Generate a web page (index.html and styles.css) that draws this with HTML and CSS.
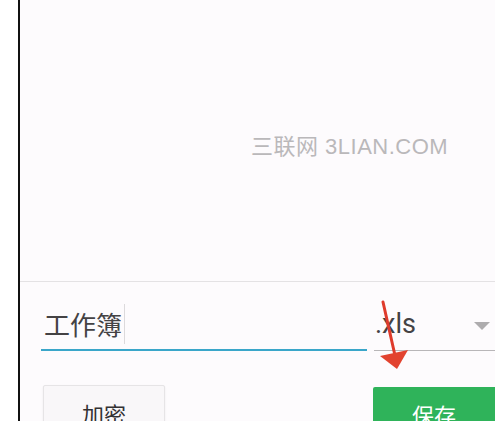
FILE: index.html
```html
<!DOCTYPE html>
<html>
<head>
<meta charset="utf-8">
<link rel="stylesheet" href="styles.css">
</head>
<body>
<div class="page">
  <div class="preview">
    <span class="watermark">三联网 3LIAN.COM</span>
  </div>
  <div class="form">
    <div class="name-field">
      <span class="name-text">工作簿</span><span class="cursor"></span>
    </div>
    <div class="ext-field">
      <span class="ext-text">.xls</span>
      <span class="caret"></span>
    </div>
  </div>
  <div class="actions">
    <div class="btn btn-encrypt">加密</div>
    <div class="btn btn-save">保存</div>
  </div>
</div>
<svg class="arrow" width="495" height="421" viewBox="0 0 495 421">
  <path d="M383 302 L396 360" stroke="#df3b2c" stroke-width="3" stroke-linecap="round" fill="none"/>
  <path d="M380 356 L408 350 L397 369 Z" fill="#e2432f"/>
</svg>
</body>
</html>
```
FILE: styles.css
```css
html, body {
  margin: 0;
  padding: 0;
  width: 495px;
  height: 421px;
  overflow: hidden;
  background: #ffffff;
}
body {
  position: relative;
}
.page {
  margin-left: 18px;
  height: 421px;
  overflow: hidden;
  border-left: 2px solid #111;
  background: #fdfbfd;
  display: flex;
  flex-direction: column;
  font-family: "Noto Sans CJK SC", "Noto Sans", sans-serif;
}
.page > * {
  flex-shrink: 0;
}
.preview {
  height: 281px;
  border-bottom: 1px solid #e4e2e4;
  display: flex;
  align-items: flex-start;
}
.watermark {
  margin-top: 133px;
  margin-left: 231px;
  font-family: "Liberation Sans", "Noto Sans CJK SC", sans-serif;
  font-size: 22px;
  letter-spacing: 0.5px;
  line-height: 28px;
  color: #bab8ba;
  white-space: nowrap;
}
.form {
  display: flex;
  align-items: flex-end;
  padding-top: 24px;
  padding-left: 21px;
  gap: 7px;
}
.name-field {
  width: 323px;
  height: 36px;
  padding: 0 0 7px 3px;
  border-bottom: 2px solid #3aa6c9;
  display: flex;
  align-items: center;
}
.name-text {
  font-size: 26px;
  line-height: 36px;
  color: #444244;
}
.cursor {
  width: 1px;
  height: 40px;
  margin-left: 2px;
  background: #dcdadc;
}
.ext-field {
  flex: 1;
  height: 36px;
  padding: 0 5px 8px 1px;
  border-bottom: 1px solid #b8b6b8;
  display: flex;
  align-items: center;
  justify-content: space-between;
}
.ext-text {
  font-family: Roboto, "Noto Sans", sans-serif;
  font-size: 27px;
  line-height: 36px;
  color: #444244;
}
.caret {
  width: 0;
  height: 0;
  border-left: 8px solid transparent;
  border-right: 8px solid transparent;
  border-top: 8px solid #aeacae;
  margin-top: 4px;
}
.actions {
  display: flex;
  justify-content: space-between;
  align-items: flex-start;
  padding-left: 23px;
  margin-top: 34px;
}
.btn {
  height: 50px;
  display: flex;
  justify-content: center;
  padding-top: 12px;
  box-sizing: border-box;
  font-size: 22px;
  line-height: 30px;
}
.btn-encrypt {
  width: 122px;
  background: #f9f7f9;
  border: 1px solid #e6e4e6;
  border-radius: 2px;
  color: #333133;
  box-shadow: 0 1px 2px rgba(0,0,0,0.08);
}
.btn-save {
  width: 122px;
  margin-top: 2px;
  background: #2fb35a;
  border-radius: 2px 0 0 0;
  color: #ffffff;
}
.arrow {
  position: absolute;
  left: 0;
  top: 0;
  pointer-events: none;
}
```
